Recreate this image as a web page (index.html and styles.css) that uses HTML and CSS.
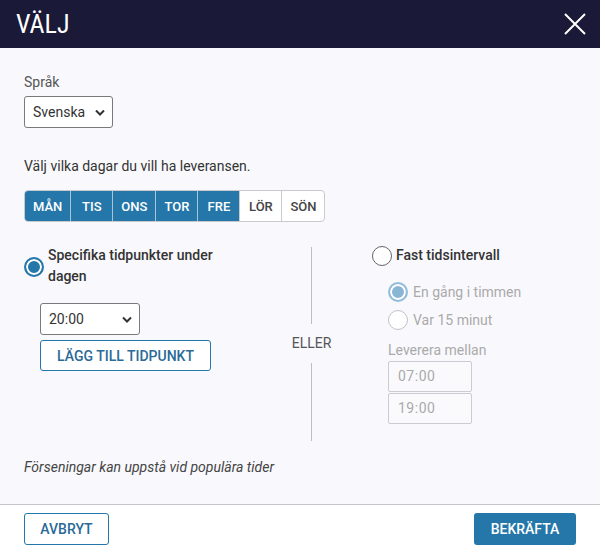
FILE: index.html
```html
<!DOCTYPE html>
<html lang="sv">
<head>
<meta charset="utf-8">
<title>Välj</title>
<link rel="stylesheet" href="styles.css">
</head>
<body>
<div class="dialog">
  <header class="dlg-head">
    <h1 class="dlg-title">VÄLJ</h1>
    <button class="close" aria-label="Stäng">
      <svg width="22" height="22" viewBox="0 0 22 22"><path d="M1 1L21 21M21 1L1 21" stroke="#fff" stroke-width="2" fill="none"/></svg>
    </button>
  </header>
  <main class="dlg-body">
    <div class="field">
      <label class="lbl">Språk</label>
      <select class="sel sel-lang"><option>Svenska</option></select>
    </div>
    <p class="days-title">Välj vilka dagar du vill ha leveransen.</p>
    <div class="days">
      <span class="day on">MÅN</span><span class="day on">TIS</span><span class="day on">ONS</span><span class="day on">TOR</span><span class="day on">FRE</span><span class="day">LÖR</span><span class="day">SÖN</span>
    </div>
    <div class="opts">
      <div class="col-left">
        <label class="radio-row main">
          <span class="radio checked"></span>
          <span class="rtext">Specifika tidpunkter under dagen</span>
        </label>
        <div class="left-inner">
          <select class="sel sel-time"><option>20:00</option></select>
          <button class="btn-outline add">LÄGG TILL TIDPUNKT</button>
        </div>
      </div>
      <div class="col-mid">
        <span class="vline top"></span>
        <span class="eller">ELLER</span>
        <span class="vline bottom"></span>
      </div>
      <div class="col-right">
        <label class="radio-row main">
          <span class="radio"></span>
          <span class="rtext">Fast tidsintervall</span>
        </label>
        <div class="right-inner">
          <label class="radio-row sub"><span class="radio dis checked"></span><span>En gång i timmen</span></label>
          <label class="radio-row sub"><span class="radio dis"></span><span>Var 15 minut</span></label>
          <div class="lev">Leverera mellan</div>
          <div class="tinput">07:00</div>
          <div class="tinput">19:00</div>
        </div>
      </div>
    </div>
    <p class="note">Förseningar kan uppstå vid populära tider</p>
  </main>
  <footer class="dlg-foot">
    <button class="btn-outline">AVBRYT</button>
    <button class="btn-solid">BEKRÄFTA</button>
  </footer>
</div>
</body>
</html>
```
FILE: styles.css
```css
* { box-sizing: border-box; }
html, body { margin: 0; padding: 0; }
body {
  font-family: Roboto, "Noto Sans", sans-serif;
  font-size: 14px;
  color: #333;
  background: #f9f9fd;
  width: 600px;
  height: 553px;
  overflow: hidden;
}
.dialog { display: flex; flex-direction: column; height: 553px; }
.dlg-head {
  height: 48px;
  flex: none;
  background: #1a1937;
  display: flex;
  align-items: center;
  justify-content: space-between;
  padding: 0 14px 0 16px;
}
.dlg-title {
  margin: 0;
  color: #fff;
  font-size: 26px;
  font-weight: 400;
  font-stretch: 75%;
  font-variation-settings: "wdth" 75;
  letter-spacing: 0;
}
.close { background: none; border: 0; padding: 0; width: 22px; height: 22px; display: block; }
.close svg { display: block; }
.dlg-body { flex: 1; padding: 24px 24px 0 24px; }
.field { display: flex; flex-direction: column; align-items: flex-start; gap: 4px; }
.lbl { line-height: 20px; color: #555; }
.sel {
  appearance: none;
  -webkit-appearance: none;
  font: inherit;
  font-size: 14px;
  color: #333;
  background: #fff url("data:image/svg+xml;utf8,<svg xmlns='http://www.w3.org/2000/svg' width='10' height='7' viewBox='0 0 10 7'><path d='M1 1.5L5 5.5L9 1.5' stroke='%23333' stroke-width='2' fill='none'/></svg>") no-repeat right 7px center;
  border: 1px solid #7a7a7a;
  border-radius: 3px;
  height: 32px;
  padding: 0 20px 0 8px;
  margin: 0;
}
.sel-lang { width: 89px; }
.sel-time { width: 100px; }
.days-title { margin: 28px 0 14px; line-height: 20px; color: #333; }
.days {
  display: inline-flex;
  border: 1px solid #c9c9d0;
  border-radius: 4px;
  overflow: hidden;
  background: #fff;
}
.day {
  height: 30px;
  min-width: 42px;
  padding: 0 8px;
  display: flex;
  align-items: center;
  justify-content: center;
  font-size: 13px;
  font-weight: 500;
  color: #444;
  border-left: 1px solid #c9c9d0;
}
.day:first-child { border-left: 0; min-width: 43px; }
.day.on { background: #2677a9; color: #fff; border-left-color: #a9c4d8; }
.day:first-child.on { border-left: 0; }
.opts { display: flex; margin-top: 23px; }
.col-left { width: 226px; }
.col-mid {
  width: 41px;
  margin-left: 41px;
  display: flex;
  flex-direction: column;
  align-items: center;
  padding-top: 2px;
}
.vline { width: 1px; background: #bdbdc4; display: block; }
.vline.top { height: 77px; }
.vline.bottom { height: 78px; }
.eller { line-height: 20px; margin: 9px 0 10px; color: #555; font-weight: 400; font-size: 14px; }
.col-right { margin-left: 40px; flex: 1; }
.radio-row { display: flex; align-items: flex-start; gap: 4px; }
.radio-row.main { line-height: 21px; font-weight: 500; color: #333; }
.radio {
  flex: none;
  width: 20px;
  height: 20px;
  border-radius: 50%;
  border: 1px solid #666;
  background: #fff;
  margin-top: 1px;
}
.col-left .radio-row.main .radio { margin-top: 12px; }
.radio.checked {
  border: 2px solid #2677a9;
  background: #2677a9;
  box-shadow: inset 0 0 0 2px #fff;
}
.radio.dis { border-color: #c2c2c8; }
.radio.dis.checked { border: 2px solid #93bddb; background: #8ab6d6; box-shadow: inset 0 0 0 2px #fff; }
.left-inner { padding-left: 16px; margin-top: 16px; display: flex; flex-direction: column; align-items: flex-start; gap: 5px; }
.btn-outline {
  font-family: inherit;
  font-size: 14px;
  font-weight: 500;
  color: #2a6a97;
  background: #fff;
  border: 1px solid #2677a9;
  border-radius: 3px;
  height: 31px;
  padding: 0 16px;
}
.add { width: 171px; padding: 0; }
.right-inner { padding-left: 16px; margin-top: 16px; color: #aaa; }
.radio-row.sub { align-items: center; height: 20px; margin-bottom: 8px; gap: 5px; }
.radio-row.sub .radio { margin-top: 0; }
.lev { line-height: 20px; margin-top: 10px; margin-bottom: 1px; }
.tinput {
  width: 84px;
  height: 31px;
  border: 1px solid #ccccd2;
  border-radius: 2px;
  background: #fafafd;
  color: #aaa;
  padding-left: 9px;
  line-height: 29px;
  letter-spacing: 0.5px;
}
.tinput + .tinput { margin-top: 1px; }
.note { margin: 16px 0 0; font-style: italic; color: #444; line-height: 20px; }
.dlg-foot {
  flex: none;
  background: #fff;
  border-top: 1px solid #c5c5cc;
  height: 49px;
  padding: 8px 24px 0;
  display: flex;
  justify-content: space-between;
  align-items: flex-start;
}
.dlg-foot .btn-outline { width: 85px; padding: 0; height: 32px; }
.btn-solid {
  font-family: inherit;
  font-size: 14px;
  font-weight: 500;
  color: #fff;
  background: #2677a9;
  border: 0;
  border-radius: 3px;
  height: 32px;
  width: 102px;
}
```
